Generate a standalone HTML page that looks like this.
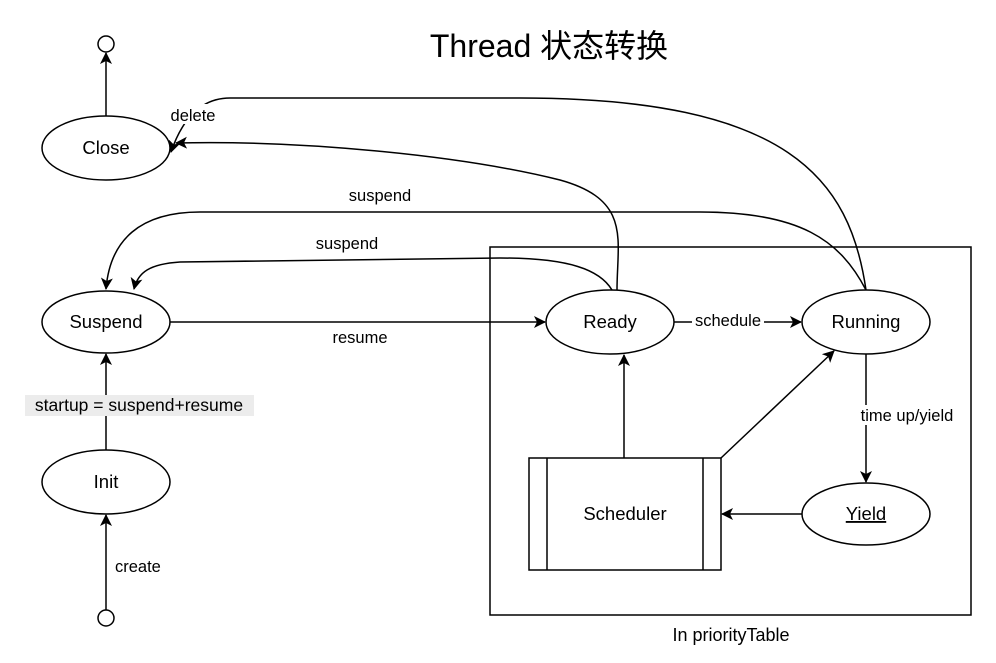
<!DOCTYPE html>
<html><head><meta charset="utf-8"><style>
html,body{margin:0;padding:0;background:#fff;}
svg{display:block;}
text{font-family:"Liberation Sans","Noto Sans CJK SC",sans-serif;fill:#000;}
</style></head><body>
<svg width="996" height="663" viewBox="0 0 996 663" xmlns="http://www.w3.org/2000/svg">
<defs>
<marker id="a" markerWidth="12" markerHeight="12" refX="11" refY="6" orient="auto" markerUnits="userSpaceOnUse">
<path d="M0,0 L12,6 L0,12 L3,6 Z" fill="#000"/>
</marker>
</defs>
<g fill="none" stroke="#000" stroke-width="1.5">
<rect x="490" y="247" width="481" height="368" fill="#fff"/>
<circle cx="106" cy="44" r="8" fill="#fff"/>
<circle cx="106" cy="618" r="8" fill="#fff"/>
<ellipse cx="106" cy="148" rx="64" ry="32" fill="#fff"/>
<ellipse cx="106" cy="322" rx="64" ry="31" fill="#fff"/>
<ellipse cx="106" cy="482" rx="64" ry="32" fill="#fff"/>
<ellipse cx="610" cy="322" rx="64" ry="32" fill="#fff"/>
<ellipse cx="866" cy="322" rx="64" ry="32" fill="#fff"/>
<ellipse cx="866" cy="514" rx="64" ry="31" fill="#fff"/>
<rect x="529" y="458" width="192" height="112" fill="#fff"/>
<line x1="547" y1="458" x2="547" y2="570"/>
<line x1="703" y1="458" x2="703" y2="570"/>

<line x1="106" y1="116" x2="106" y2="53" marker-end="url(#a)"/>
<line x1="106" y1="610" x2="106" y2="515" marker-end="url(#a)"/>
<line x1="106" y1="450" x2="106" y2="354" marker-end="url(#a)"/>
<line x1="170" y1="322" x2="545" y2="322" marker-end="url(#a)"/>
<line x1="674" y1="322" x2="801" y2="322" marker-end="url(#a)"/>
<line x1="866" y1="354" x2="866" y2="482" marker-end="url(#a)"/>
<line x1="802" y1="514" x2="722" y2="514" marker-end="url(#a)"/>
<line x1="624" y1="458" x2="624" y2="355" marker-end="url(#a)"/>
<line x1="721" y1="458" x2="834" y2="351" marker-end="url(#a)"/>

<path d="M866,290 C850,180 790,98 520,98 L230,98 C200,98 182,120 171,152" marker-end="url(#a)"/>
<path d="M617,290 C617,240 632,200 560,180 C460,155 300,140 176,143" marker-end="url(#a)"/>
<path d="M866,290 C840,240 800,212 700,212 L200,212 C140,212 110,240 106,289" marker-end="url(#a)"/>
<path d="M612,290 C600,270 570,258 500,258 L180,262 C150,264 138,272 134,289" marker-end="url(#a)"/>
</g>
<text x="549" y="57" font-size="32" text-anchor="middle">Thread 状态转换</text>
<g font-size="18.5" text-anchor="middle">
<text x="106" y="154">Close</text>
<text x="106" y="328">Suspend</text>
<text x="106" y="488">Init</text>
<text x="610" y="328">Ready</text>
<text x="866" y="328">Running</text>
<text x="866" y="520" text-decoration="underline">Yield</text>
<text x="625" y="520">Scheduler</text>
</g>
<rect x="25" y="395" width="229" height="21" fill="#ececec"/>
<rect x="168" y="104" width="50" height="20" fill="#fff"/>
<rect x="692" y="310" width="72" height="20" fill="#fff"/>
<rect x="855" y="405" width="104" height="20" fill="#fff"/>
<g font-size="16.5">
<text x="139" y="411" text-anchor="middle" font-size="17.5">startup = suspend+resume</text>
<text x="115" y="572">create</text>
<text x="193" y="121" text-anchor="middle">delete</text>
<text x="380" y="201" text-anchor="middle">suspend</text>
<text x="347" y="249" text-anchor="middle">suspend</text>
<text x="360" y="343" text-anchor="middle">resume</text>
<text x="728" y="326" text-anchor="middle">schedule</text>
<text x="907" y="421" text-anchor="middle">time up/yield</text>
<text x="731" y="641" text-anchor="middle" font-size="18">In priorityTable</text>
</g>
</svg>
</body></html>
